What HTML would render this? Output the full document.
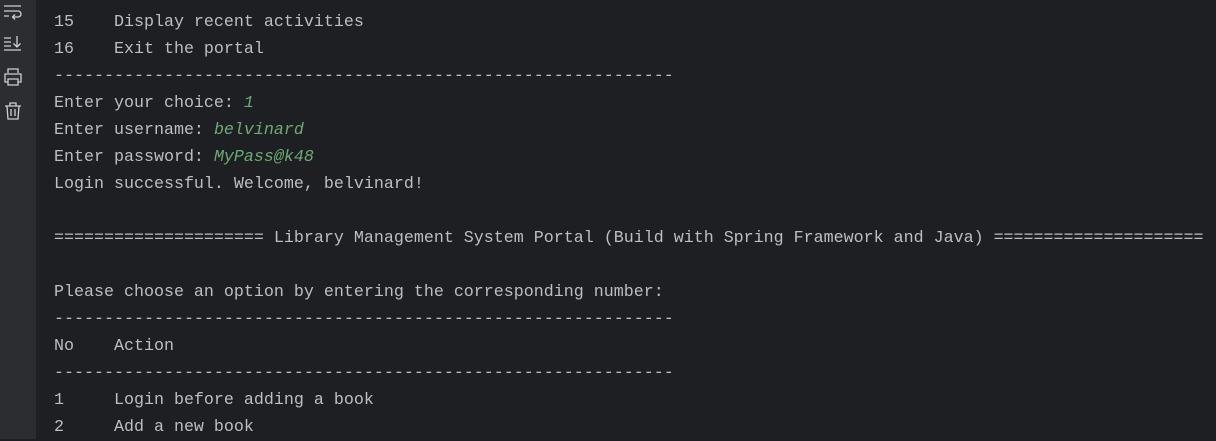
<!DOCTYPE html>
<html><head><meta charset="utf-8"><style>
html,body{margin:0;padding:0;width:1216px;height:439px;overflow:hidden;background:#1e1f22}
.side{position:absolute;left:0;top:0;width:36px;height:439px;background:#2b2d30}
.con{position:absolute;left:54px;top:9px;font-family:"Liberation Mono",monospace;font-size:16.67px;line-height:27px;color:#bcbec4;white-space:pre;margin:0}
.g{color:#6aab73;font-style:italic}
svg{position:absolute;left:3px}
</style></head><body>
<div class="side">
<svg style="top:2px" width="20" height="20" viewBox="0 0 20 20" fill="none" stroke="#ced0d6" stroke-width="1.3"><path d="M1 4h17M1 9h14a3 3 0 0 1 0 6h-5M12 12.5l-2.5 2.5 2.5 2.5M1 14h5"/></svg>
<svg style="top:33px" width="20" height="20" viewBox="0 0 20 20" fill="none" stroke="#ced0d6" stroke-width="1.3"><path d="M1 5h7M1 9h7M1 13h7M1 17h17M14 3v11M10.5 10.5l3.5 3.5 3.5-3.5"/></svg>
<svg style="top:67px" width="20" height="20" viewBox="0 0 20 20" fill="none" stroke="#ced0d6" stroke-width="1.3"><path d="M5 6V2h10v4M5 15H2V7h16v8h-3M5 12h10v6H5z"/></svg>
<svg style="top:101px" width="20" height="20" viewBox="0 0 20 20" fill="none" stroke="#ced0d6" stroke-width="1.3"><path d="M2 5h16M7 5V2h6v3M4 5l1 13h10l1-13M8 8v7M12 8v7"/></svg>
</div>
<pre class="con">15    Display recent activities
16    Exit the portal
--------------------------------------------------------------
Enter your choice: <span class="g">1</span>
Enter username: <span class="g">belvinard</span>
Enter password: <span class="g">MyPass@k48</span>
Login successful. Welcome, belvinard!

===================== Library Management System Portal (Build with Spring Framework and Java) =====================

Please choose an option by entering the corresponding number:
--------------------------------------------------------------
No    Action
--------------------------------------------------------------
1     Login before adding a book
2     Add a new book</pre>
</body></html>
